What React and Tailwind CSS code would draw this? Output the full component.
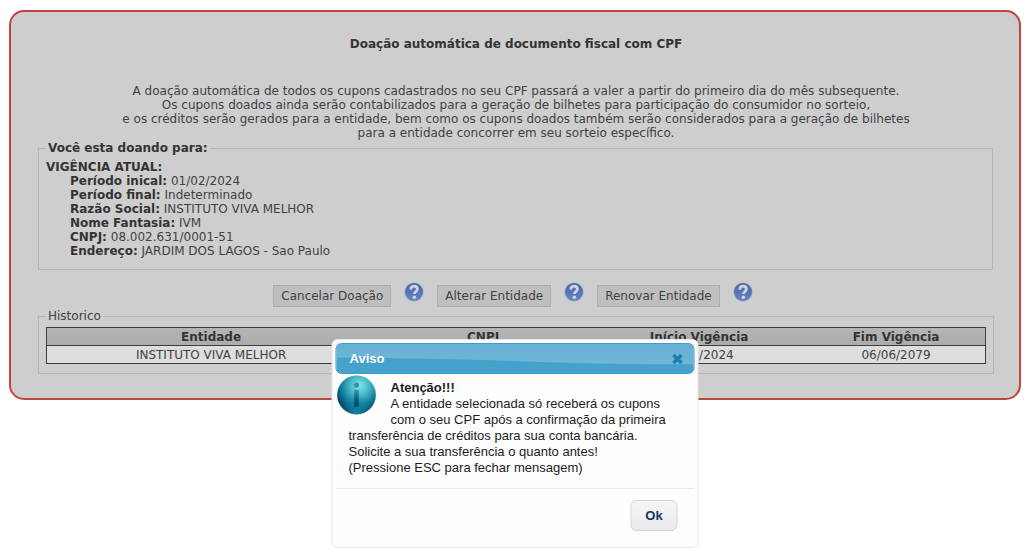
import { useEffect, useState } from "react";

const details = [
  { label: "Período inical:", value: "01/02/2024" },
  { label: "Período final:", value: "Indeterminado" },
  { label: "Razão Social:", value: "INSTITUTO VIVA MELHOR" },
  { label: "Nome Fantasia:", value: "IVM" },
  { label: "CNPJ:", value: "08.002.631/0001-51" },
  { label: "Endereço:", value: "JARDIM DOS LAGOS - Sao Paulo" },
];

const actions = ["Cancelar Doação", "Alterar Entidade", "Renovar Entidade"];

const history = [
  {
    entidade: "INSTITUTO VIVA MELHOR",
    cnpj: "08.002.631/0001-51",
    inicio: "01/02/2024",
    fim: "06/06/2079",
  },
];

const HelpIcon = () => (
  <svg viewBox="0 0 20 20" className="block size-5" aria-hidden="true">
    <defs>
      <linearGradient id="help-fill" x1="0" y1="0" x2="0" y2="1">
        <stop offset="0" stopColor="#4a64a4" />
        <stop offset="1" stopColor="#6684c6" />
      </linearGradient>
    </defs>
    <circle cx="10" cy="10" r="9.8" fill="#aeb6c8" />
    <circle cx="10" cy="10" r="9" fill="url(#help-fill)" />
    <path
      d="M6.7 7.6C6.8 5.2 8.2 4.1 10.1 4.1c2 0 3.3 1.2 3.3 2.9 0 2.3-3 2.6-3 5"
      fill="none"
      stroke="#d0d3db"
      strokeWidth="2.8"
    />
    <circle cx="10.3" cy="15.2" r="1.8" fill="#d0d3db" />
  </svg>
);

const InfoIcon = () => (
  <svg viewBox="0 0 40 40" className="block size-10" aria-hidden="true">
    <defs>
      <radialGradient id="info-fill" cx="0.58" cy="0.26" r="0.74">
        <stop offset="0" stopColor="#86e6ea" />
        <stop offset="0.35" stopColor="#44b6c6" />
        <stop offset="0.7" stopColor="#0b7392" />
        <stop offset="1" stopColor="#04314c" />
      </radialGradient>
      <radialGradient id="info-glow" cx="0.5" cy="1" r="0.5">
        <stop offset="0" stopColor="#1595bd" stopOpacity="0.8" />
        <stop offset="1" stopColor="#1595bd" stopOpacity="0" />
      </radialGradient>
      <linearGradient id="info-stem" x1="0" y1="0" x2="0" y2="1">
        <stop offset="0" stopColor="#2b9ab0" />
        <stop offset="0.6" stopColor="#0b5b7a" />
        <stop offset="1" stopColor="#064463" />
      </linearGradient>
    </defs>
    <circle cx="20" cy="20" r="19.8" fill="#b4c6ce" />
    <circle cx="20" cy="20" r="19.2" fill="url(#info-fill)" />
    <circle cx="20" cy="20" r="19.2" fill="url(#info-glow)" />
    <circle cx="20" cy="10" r="2.6" fill="#2a98ae" />
    <rect x="17.7" y="14.8" width="4.6" height="17" fill="url(#info-stem)" />
  </svg>
);

const AlertDialog = ({ onClose }) => (
  <div
    role="dialog"
    aria-labelledby="dialog-title"
    className="absolute top-[339px] left-1/2 w-[367px] -translate-x-1/2 rounded-md border border-[#e6e6e6] bg-[#fdfdfd] p-[3px] font-['Liberation_Sans',Arial,sans-serif] text-[13px] leading-4 text-[#1c1c1c]"
  >
    {/* Title bar */}
    <div className="relative flex h-[31px] items-center justify-between overflow-hidden rounded-md border border-[#3b9bd3] bg-gradient-to-b from-[#66b0d3] to-[#74b9d9] pr-[10px] pl-[13px]">
      <svg
        viewBox="0 0 360 30"
        preserveAspectRatio="none"
        className="absolute inset-0 size-full"
        aria-hidden="true"
      >
        <path d="M0 14Q110 15 190 18T360 21V30H0Z" fill="#45a2cc" />
      </svg>
      <h2 id="dialog-title" className="relative font-bold text-white">
        Aviso
      </h2>
      <button
        type="button"
        onClick={onClose}
        aria-label="Fechar"
        className="relative"
      >
        <svg viewBox="0 0 12 12" className="block size-3" aria-hidden="true">
          <path
            d="M2 2L10 10M10 2L2 10"
            stroke="#1a7fac"
            strokeWidth="3.6"
          />
        </svg>
      </button>
    </div>

    {/* Message */}
    <div className="px-[13px] pt-[6px] pb-3">
      <div className="float-left -mt-[5px] -ml-3 mr-[14px]">
        <InfoIcon />
      </div>
      <p>
        <strong>Atenção!!!</strong>
        <br />
        A entidade selecionada só receberá os cupons
        <br />
        com o seu CPF após a confirmação da primeira
        <br />
        transferência de créditos para sua conta bancária.
        <br />
        Solicite a sua transferência o quanto antes!
        <br />
        (Pressione ESC para fechar mensagem)
      </p>
    </div>

    {/* Buttons */}
    <div className="flex justify-end border-t border-[#e8e8e8] pt-[11px] pr-[17px] pb-[13px]">
      <button
        type="button"
        onClick={onClose}
        className="h-[31px] w-[47px] rounded-md border border-[#d3d3d3] bg-gradient-to-b from-[#f5f5f5] to-[#ebebeb] font-bold text-[#14336b]"
      >
        Ok
      </button>
    </div>
  </div>
);

const App = () => {
  const [showAlert, setShowAlert] = useState(true);

  useEffect(() => {
    const handleKey = (e) => {
      if (e.key === "Escape") setShowAlert(false);
    };
    window.addEventListener("keydown", handleKey);
    return () => window.removeEventListener("keydown", handleKey);
  }, []);

  return (
    <div className="relative min-h-screen bg-white px-[9px] pt-[10px] font-['DejaVu_Sans',Verdana,sans-serif] text-[12px] leading-[14px] text-[#414141]">
      <main className="rounded-[15px] border-2 border-[#c0453f] bg-[#cecece] pt-[25px] pr-[25px] pb-6 pl-[27px]">
        <h1 className="text-center font-bold text-[#343434]">
          Doação automática de documento fiscal com CPF
        </h1>

        <p className="mt-[33px] text-center">
          A doação automática de todos os cupons cadastrados no seu CPF passará
          a valer a partir do primeiro dia do mês subsequente.
          <br />
          Os cupons doados ainda serão contabilizados para a geração de bilhetes
          para participação do consumidor no sorteio,
          <br />
          e os créditos serão gerados para a entidade, bem como os cupons doados
          também serão considerados para a geração de bilhetes
          <br />
          para a entidade concorrer em seu sorteio específico.
        </p>

        {/* Current donation */}
        <fieldset className="mt-px mr-px border border-[#b5b5b5] px-[7px] pt-[5px] pb-[11px]">
          <legend className="px-[2px] font-bold text-[#343434]">
            Você esta doando para:
          </legend>
          <h2 className="font-bold text-[#343434]">VIGÊNCIA ATUAL:</h2>
          <ul className="pl-6">
            {details.map((item) => (
              <li key={item.label}>
                <strong className="text-[#343434]">{item.label}</strong>{" "}
                {item.value}
              </li>
            ))}
          </ul>
        </fieldset>

        {/* Actions */}
        <div className="mt-3 flex justify-center gap-[13px] pr-[6px]">
          {actions.map((label) => (
            <div key={label} className="flex items-start gap-[13px]">
              <button
                type="button"
                className="mt-[3px] h-[22px] border border-[#adadad] bg-[#bfbfbf] px-[7px]"
              >
                {label}
              </button>
              <button type="button" aria-label={`Ajuda: ${label}`}>
                <HelpIcon />
              </button>
            </div>
          ))}
        </div>

        {/* History */}
        <fieldset className="mt-[2px] border border-[#b5b5b5] px-[7px] pt-[4px] pb-[9px]">
          <legend className="px-[2px]">Historico</legend>
          <table className="w-full table-fixed border-collapse border border-[#3c3c3c] text-center">
            <thead className="bg-gradient-to-b from-[#b4b4b4] to-[#acacac] text-[#343434]">
              <tr className="h-[18px] border-b border-[#3c3c3c]">
                <th className="w-[35%]">Entidade</th>
                <th className="w-[23%]">CNPJ</th>
                <th className="w-[23%]">Início Vigência</th>
                <th className="w-[19%]">Fim Vigência</th>
              </tr>
            </thead>
            <tbody className="bg-[#dedede]">
              {history.map((row) => (
                <tr key={row.cnpj} className="h-[18px]">
                  <td>{row.entidade}</td>
                  <td>{row.cnpj}</td>
                  <td>{row.inicio}</td>
                  <td>{row.fim}</td>
                </tr>
              ))}
            </tbody>
          </table>
        </fieldset>
      </main>

      {showAlert && <AlertDialog onClose={() => setShowAlert(false)} />}
    </div>
  );
};

export default App;
